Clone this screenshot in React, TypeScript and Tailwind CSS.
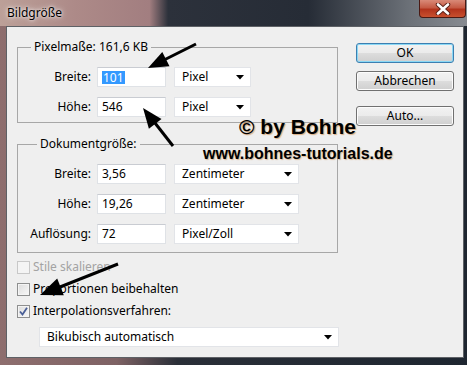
import React from "react";

const font = "font-['Noto_Sans',sans-serif]";

function Select({ label, w }: { label: string; w: string }) {
  return (
    <div className={`${w} h-[20px] bg-white border border-[#e2e4e8] flex items-center justify-between pl-[7px] pr-[6px]`}>
      <span className="text-[12px] leading-none text-black">{label}</span>
      <svg width="8" height="5" viewBox="0 0 8 5"><path d="M0 0 H8 L4 4.5 Z" fill="#000" /></svg>
    </div>
  );
}

function Input({ children }: { children: React.ReactNode }) {
  return (
    <div className="w-[69px] h-[20px] bg-white border border-[#dfe2e6] border-t-[#c9ccd2] flex items-center pl-[4px] text-[12px] leading-none text-black">
      {children}
    </div>
  );
}

function Row({ label, value, unit, sw }: { label: string; value: React.ReactNode; unit: string; sw: string }) {
  return (
    <div className="flex items-center h-[20px]">
      <div className="w-[73px] text-right text-[12px] leading-none text-black">{label}</div>
      <div className="ml-[6px]"><Input>{value}</Input></div>
      <div className="ml-[8px]"><Select label={unit} w={sw} /></div>
    </div>
  );
}

function Btn({ children, def }: { children: React.ReactNode; def?: boolean }) {
  return (
    <div
      className={`w-[98px] h-[20px] rounded-[3px] border flex items-center justify-center text-[12px] leading-none text-black bg-[linear-gradient(#f2f2f2,#ebebeb_50%,#dddddd_51%,#cfcfcf)] ${
        def ? "border-[#3c7fb1] shadow-[inset_0_0_0_1px_#8ad8f5]" : "border-[#707070] shadow-[inset_0_0_0_1px_#fcfcfc]"
      }`}
    >
      {children}
    </div>
  );
}

function Check({ label, checked, disabled }: { label: string; checked?: boolean; disabled?: boolean }) {
  return (
    <div className="flex items-center h-[22px]">
      <div
        className={`w-[13px] h-[13px] border flex items-center justify-center ${
          disabled ? "border-[#c8c8c8] bg-[#f4f4f4]" : "border-[#8e8f8f] bg-[linear-gradient(135deg,#dcdcdc,#f8f8f8)] shadow-[inset_0_0_0_1px_#f4f4f4]"
        }`}
      >
        {checked && (
          <svg width="9" height="9" viewBox="0 0 9 9">
            <path d="M1 4.5 L3.5 7.5 L8 0.8" fill="none" stroke="#4a5f97" strokeWidth="1.8" />
          </svg>
        )}
      </div>
      <span className={`ml-[3px] text-[12px] leading-none ${disabled ? "text-[#a3a3a3]" : "text-black"}`}>{label}</span>
    </div>
  );
}

export default function App() {
  return (
    <div className={`relative w-[467px] h-[365px] overflow-hidden ${font} bg-[linear-gradient(90deg,#8e6e6e_0%,#7e6264_25%,#2a2f38_38%,#1e2630_100%)]`}>
      {/* Title bar */}
      <div className="h-[26px] flex items-start justify-between bg-[linear-gradient(90deg,#bca098_0%,#ad8a88_16%,#a27e80_32%,#2c313b_36%,#262c36_66%,#6d7279_88%,#878b91_100%)]">
        <span className="ml-[7px] mt-[5px] text-[12px] leading-[16px] text-black [text-shadow:0_0_6px_rgba(255,255,255,0.9),0_0_3px_rgba(255,255,255,0.9)]">
          Bildgröße
        </span>
        <div className="mr-[1px] w-[47px] h-[18px] rounded-b-[4px] border border-t-0 border-[#4a1a14] bg-[linear-gradient(#d98a78,#c55a44_45%,#b2331c_55%,#c8502e)] flex items-center justify-center">
          <svg width="16" height="12" viewBox="0 0 16 12">
            <path d="M3 1.5 L13 10.5 M13 1.5 L3 10.5" stroke="#5a2218" strokeWidth="4.5" strokeLinecap="round" />
            <path d="M3 1.5 L13 10.5 M13 1.5 L3 10.5" stroke="#ffffff" strokeWidth="2.6" strokeLinecap="round" />
          </svg>
        </div>
      </div>

      {/* Client area */}
      <div className="ml-[6px] mr-[3px] h-[332px] border border-[#5e6166] bg-[#efefef] flex">
        {/* Left column */}
        <div className="pl-[10px] pt-[12px] w-[340px] flex flex-col">
          <fieldset className="w-[321px] border border-[#a7a7a7] px-0 pt-[12px] pb-[5px] flex flex-col gap-[10px]">
            <legend className="ml-[13px] px-[3px] text-[12px] leading-[16px] text-black">Pixelmaße: 161,6 KB</legend>
            <Row
              label="Breite:"
              value={<span className="inline-block bg-[#3399ff] text-white leading-[13px] px-[1px]">101</span>}
              unit="Pixel"
              sw="w-[77px]"
            />
            <Row label="Höhe:" value="546" unit="Pixel" sw="w-[77px]" />
          </fieldset>

          <fieldset className="mt-[13px] w-[321px] border border-[#a7a7a7] px-0 pt-[12px] pb-[8px] flex flex-col gap-[10px]">
            <legend className="ml-[19px] px-[3px] text-[12px] leading-[16px] text-black">Dokumentgröße:</legend>
            <Row label="Breite:" value="3,56" unit="Zentimeter" sw="w-[125px]" />
            <Row label="Höhe:" value="19,26" unit="Zentimeter" sw="w-[125px]" />
            <Row label="Auflösung:" value="72" unit="Pixel/Zoll" sw="w-[125px]" />
          </fieldset>

          <div className="mt-[3px] flex flex-col">
            <Check label="Stile skalieren" disabled />
            <Check label="Proportionen beibehalten" />
            <Check label="Interpolationsverfahren:" checked />
          </div>
          <div className="mt-[5px] ml-[22px]">
            <Select label="Bikubisch automatisch" w="w-[300px]" />
          </div>
        </div>

        {/* Right column buttons */}
        <div className="ml-[9px] pt-[16px] flex flex-col">
          <Btn def>OK</Btn>
          <div className="mt-[8px]"><Btn>Abbrechen</Btn></div>
          <div className="mt-[15px]"><Btn>Auto...</Btn></div>
        </div>
      </div>

      {/* Watermark */}
      <div className="absolute left-[239px] top-[116px] font-['Liberation_Sans',Arial,sans-serif] font-bold text-[21px] leading-none text-black [text-shadow:1px_1px_1px_rgba(200,120,40,0.55)] whitespace-nowrap">
        © by Bohne
      </div>
      <div className="absolute left-[203px] top-[146px] font-['Liberation_Sans',Arial,sans-serif] font-bold text-[16px] leading-none text-black [text-shadow:1px_1px_1px_rgba(200,120,40,0.45)] whitespace-nowrap">
        www.bohnes-tutorials.de
      </div>

      {/* Arrows */}
      <svg className="absolute left-0 top-0 pointer-events-none" width="467" height="365" viewBox="0 0 467 365">
        <line x1="196" y1="44" x2="164" y2="60" stroke="#000" strokeWidth="3" />
        <polygon points="148,68 169.5,66.3 162.3,51.9" fill="#000" />
        <line x1="173" y1="146" x2="155" y2="123" stroke="#000" strokeWidth="3" />
        <polygon points="143,108 161.5,119 148.9,128.8" fill="#000" />
        <line x1="118" y1="264" x2="60" y2="287" stroke="#000" strokeWidth="3" />
        <polygon points="40,295 63.8,295.3 57.2,278.5" fill="#000" />
      </svg>
    </div>
  );
}
